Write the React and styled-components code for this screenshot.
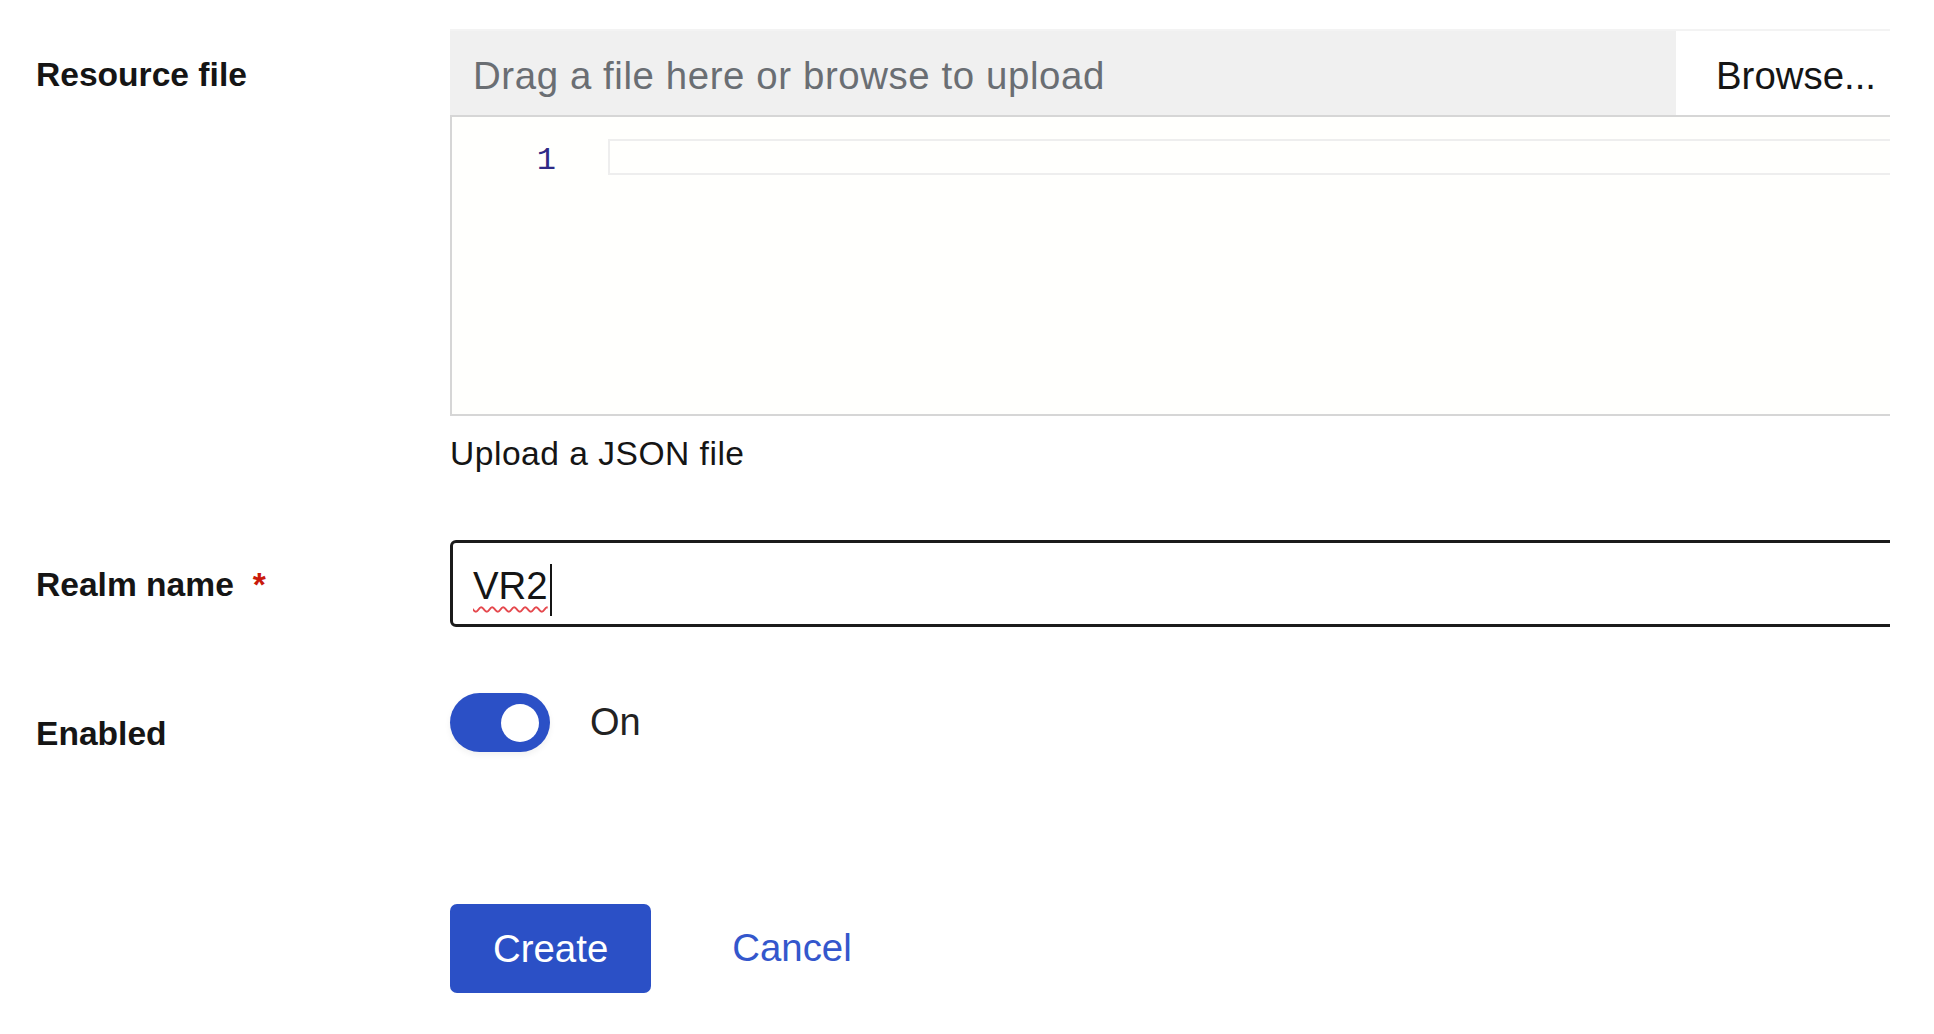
import React from 'react';
import styled, { createGlobalStyle } from 'styled-components';

const blue = '#2b50c6';
const ink = '#151515';
const line = '#d6d6d6';

const GlobalStyle = createGlobalStyle`
  body {
    margin: 0;
    background: #fff;
    font-family: "Liberation Sans", Arial, sans-serif;
    color: ${ink};
  }
`;

const Viewport = styled.div`
  width: 1890px;
  overflow: hidden;
`;

const Form = styled.form`
  padding: 29px 0 0 36px;
`;

const Row = styled.div`
  display: grid;
  grid-template-columns: 414px 1480px;
  align-items: start;
  margin-top: ${p => p.gap || 0}px;
`;

const Label = styled.label`
  display: flex;
  align-items: baseline;
  padding-top: ${p => p.offset}px;
  font-size: 33.6px;
  line-height: 50.4px;
  font-weight: 700;
  color: ${ink};
`;

const Required = styled.span`
  margin-left: 19px;
  color: #c9190b;
  font-weight: 700;
`;

const Field = styled.div`
  display: flex;
  flex-direction: column;
`;

const FileBar = styled.div`
  display: flex;
  height: 88px;
  box-sizing: border-box;
  border-top: 2px solid #f3f3f3;
  border-bottom: 2px solid ${line};
`;

const FileName = styled.div`
  flex: 1;
  display: flex;
  align-items: center;
  padding: 5px 0 0 23px;
  background: #f0f0f0;
  font-size: 38.4px;
  letter-spacing: 0.6px;
  color: #6a6e73;
`;

const BrowseButton = styled.button`
  width: 254px;
  padding: 5px 0 0 40px;
  border: none;
  background: #fff;
  text-align: left;
  font-family: inherit;
  font-size: 38.4px;
  color: ${ink};
`;

const Editor = styled.div`
  display: flex;
  align-items: flex-start;
  height: 299px;
  box-sizing: border-box;
  padding-top: 22px;
  border: 2px solid ${line};
  border-top: none;
  background: #fffffd;
`;

const Gutter = styled.div`
  width: 156px;
  box-sizing: border-box;
  padding: 3px 52px 0 0;
  text-align: right;
  font-family: "Liberation Mono", "DejaVu Sans Mono", monospace;
  font-size: 32px;
  line-height: 38px;
  color: #2f2a86;
`;

const CurrentLine = styled.div`
  flex: 1;
  height: 36px;
  box-sizing: border-box;
  border: 2px solid #eeeeee;
  background: #fffffd;
`;

const Helper = styled.div`
  margin-top: 13px;
  font-size: 33.6px;
  line-height: 50.4px;
  letter-spacing: 0.5px;
  color: ${ink};
`;

const TextBox = styled.div`
  display: flex;
  align-items: center;
  height: 87px;
  box-sizing: border-box;
  padding: 4px 0 0 20px;
  border: 3px solid #1b1b1b;
  border-radius: 6px;
  font-size: 38.4px;
  color: ${ink};
`;

const Misspelled = styled.span`
  text-decoration: underline wavy #e5484d;
  text-decoration-thickness: 2px;
  text-underline-offset: 7px;
`;

const Caret = styled.span`
  width: 2px;
  height: 52px;
  margin: 8px 0 0 2px;
  background: ${ink};
`;

const SwitchRow = styled.div`
  display: flex;
  align-items: center;
`;

const Switch = styled.span`
  display: inline-flex;
  align-items: center;
  justify-content: flex-end;
  width: 100px;
  height: 59px;
  box-sizing: border-box;
  padding-right: 11px;
  border-radius: 30px;
  background: ${blue};
  box-shadow: 0 3px 6px rgba(0, 0, 0, 0.06);
`;

const Knob = styled.span`
  width: 38px;
  height: 38px;
  border-radius: 50%;
  background: #fff;
`;

const SwitchText = styled.span`
  margin-left: 40px;
  font-size: 38px;
  color: #222;
`;

const Actions = styled.div`
  display: flex;
  align-items: center;
  gap: 41px;
`;

const Button = styled.button`
  height: 89px;
  padding: ${p => (p.link ? '0 40px' : '2px 43px 0')};
  border: none;
  border-radius: 7px;
  background: ${p => (p.link ? 'transparent' : blue)};
  font-family: inherit;
  font-size: 38.4px;
  color: ${p => (p.link ? '#3457cc' : '#fff')};
  cursor: pointer;
`;

export default function App() {
  return (
    <Viewport>
      <GlobalStyle />
      <Form onSubmit={e => e.preventDefault()}>
        <Row>
          <Label offset={21}>Resource file</Label>
          <Field>
            <FileBar>
              <FileName>Drag a file here or browse to upload</FileName>
              <BrowseButton type="button">Browse...</BrowseButton>
            </FileBar>
            <Editor>
              <Gutter>1</Gutter>
              <CurrentLine />
            </Editor>
            <Helper>Upload a JSON file</Helper>
          </Field>
        </Row>

        <Row gap={61}>
          <Label offset={20}>
            Realm name<Required>*</Required>
          </Label>
          <TextBox>
            <Misspelled>VR2</Misspelled>
            <Caret />
          </TextBox>
        </Row>

        <Row gap={66}>
          <Label offset={16}>Enabled</Label>
          <SwitchRow>
            <Switch>
              <Knob />
            </Switch>
            <SwitchText>On</SwitchText>
          </SwitchRow>
        </Row>

        <Row gap={144}>
          <span />
          <Actions>
            <Button type="submit">Create</Button>
            <Button type="button" link>Cancel</Button>
          </Actions>
        </Row>
      </Form>
    </Viewport>
  );
}
